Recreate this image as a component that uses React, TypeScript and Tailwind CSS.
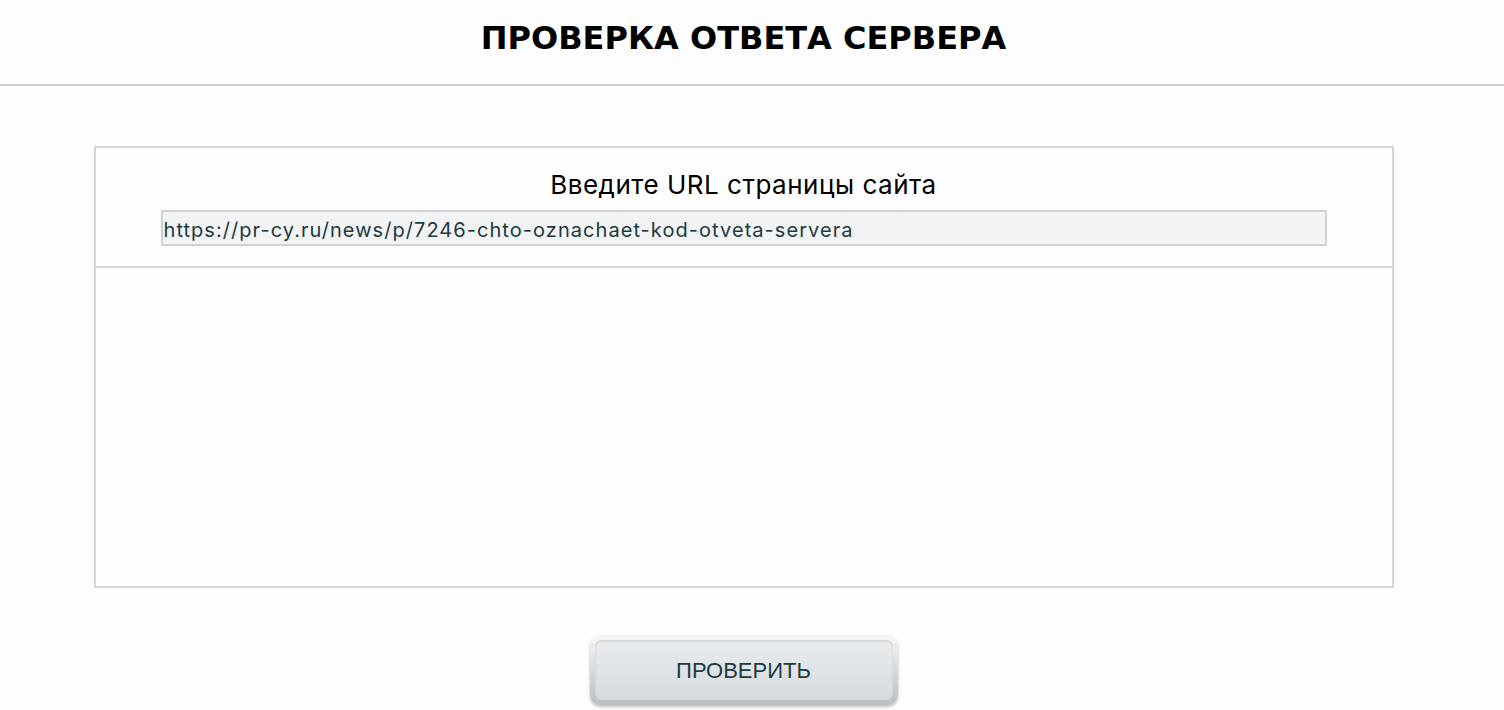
export default function App() {
  return (
    <div className="min-h-[710px] bg-[#fdfdfd] font-['Liberation_Sans',Arial,sans-serif]">
      {/* Header */}
      <header className="h-[86px] border-b-2 border-[#cfcfcf] flex items-center justify-center pb-[8px] pr-[17px]">
        <h1 className="text-[32px] font-bold tracking-[0px] text-black font-['DejaVu_Sans',Verdana,sans-serif]">
          ПРОВЕРКА ОТВЕТА СЕРВЕРА
        </h1>
      </header>

      <main className="pr-[17px]">
        {/* Form box */}
        <div className="mx-auto mt-[60px] w-[1300px] border-2 border-[#d6d6d6] bg-[#fefefe]">
          <div className="h-[120px] border-b-2 border-[#d6d6d6] flex flex-col items-center pt-[22px]">
            <label className="text-[26px] leading-[30px] tracking-[0.5px] text-black font-['Inter',Arial,sans-serif]">Введите URL страницы сайта</label>
            <div className="mt-[10px] w-[1166px] h-[36px] bg-[#f2f3f5] border-2 border-[#d0d0d0] flex items-center pl-[1px] pt-[3px]">
              <span className="text-[20px] text-[#1c3a40] tracking-[1.05px] font-['Inter',Arial,sans-serif]">
                https://pr-cy.ru/news/p/7246-chto-oznachaet-kod-otveta-servera
              </span>
            </div>
          </div>
          <div className="h-[318px]" />
        </div>

        {/* Button */}
        <div className="flex justify-center mt-[47px]">
          <button className="w-[308px] h-[70px] rounded-[10px] p-[5px] bg-gradient-to-b from-[#f4f5f6] to-[#b9bec2] shadow-[0_2px_3px_rgba(0,0,0,0.25)]">
            <div className="h-full rounded-[7px] bg-gradient-to-b from-[#e9ecee] to-[#d5dadd] flex items-center justify-center shadow-[inset_0_1px_2px_rgba(0,0,0,0.15)]">
              <span className="text-[22px] text-[#1c3a40]">ПРОВЕРИТЬ</span>
            </div>
          </button>
        </div>
      </main>
    </div>
  );
}
